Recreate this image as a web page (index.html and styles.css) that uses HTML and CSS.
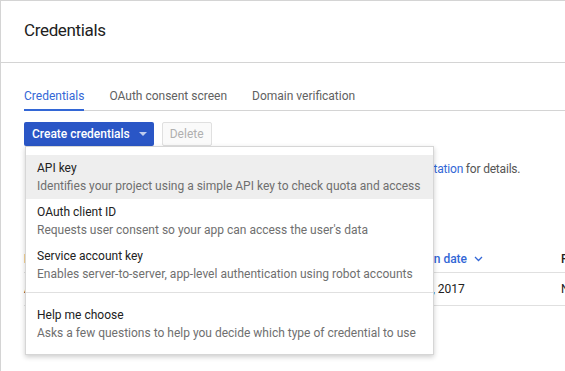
FILE: index.html
```html
<!DOCTYPE html>
<html lang="en">
<head>
  <meta charset="UTF-8">
  <meta name="viewport" content="width=device-width, initial-scale=1">
  <title>Credentials</title>
  <link rel="stylesheet" href="styles.css">
</head>
<body>

<div class="page">
  <div class="page-header">Credentials</div>

  <div class="content">
    <div class="tabs">
      <div class="tab active">Credentials</div>
      <div class="tab">OAuth consent screen</div>
      <div class="tab">Domain verification</div>
    </div>

    <div class="actions">
      <button class="btn-primary">Create credentials <span class="caret"></span></button>
      <button class="btn-disabled" disabled>Delete</button>

      <div class="menu">
        <div class="menu-item hover">
          <div class="item-title">API key</div>
          <div class="item-desc">Identifies your project using a simple API key to check quota and access</div>
        </div>
        <div class="menu-item">
          <div class="item-title">OAuth client ID</div>
          <div class="item-desc">Requests user consent so your app can access the user's data</div>
        </div>
        <div class="menu-item">
          <div class="item-title">Service account key</div>
          <div class="item-desc">Enables server-to-server, app-level authentication using robot accounts</div>
        </div>
        <div class="menu-divider"></div>
        <div class="menu-item">
          <div class="item-title">Help me choose</div>
          <div class="item-desc">Asks a few questions to help you decide which type of credential to use</div>
        </div>
      </div>
    </div>

    <p class="intro">Create credentials to access your enabled APIs. Refer to the <a href="#">API documentation</a> for details.</p>

    <div class="table">
      <div class="row head">
        <div>Name</div>
        <div class="sorted">Creation date
          <svg width="9" height="6" viewBox="0 0 9 6"><path d="M1 1l3.5 3.5L8 1" fill="none" stroke="#3367d6" stroke-width="1.3"/></svg>
        </div>
        <div>Restrictions</div>
      </div>
      <div class="row">
        <div>API key 1</div>
        <div>Mar 23, 2017</div>
        <div>None</div>
      </div>
    </div>
  </div>
</div>

</body>
</html>
```

FILE: styles.css
```css
body {
  margin: 0;
  font-family: Roboto, 'Liberation Sans', sans-serif;
  font-size: 12px;
  color: #212121;
  overflow: hidden;
}

.page {
  border-top: 1px solid #d4d4d4;
  border-left: 1px solid #d4d4d4;
  height: 370px;
  background: #fff;
}

.page-header {
  font-size: 17px;
  letter-spacing: -0.35px;
  line-height: 24px;
  padding: 17px 23px 20px;
  border-bottom: 1px solid #d4d4d4;
}

.content {
  padding: 0 0 0 23px;
}

.tabs {
  display: flex;
  gap: 25px;
  margin-top: 24px;
  border-bottom: 1px solid #d4d4d4;
  line-height: 18px;
}

.tab {
  color: #616161;
  padding-bottom: 4px;
  border-bottom: 2px solid transparent;
  margin-bottom: -1px;
}

.tab.active {
  color: #3367d6;
  border-bottom-color: #3367d6;
}

.actions {
  position: relative;
  display: flex;
  gap: 8px;
  margin-top: 11px;
}

button {
  font-family: inherit;
  font-size: 12px;
  height: 24px;
  border-radius: 2px;
  padding: 0 8px;
}

.btn-primary {
  background: #2a56c6;
  color: #fff;
  font-weight: 500;
  border: none;
  display: flex;
  align-items: center;
  padding-right: 7px;
}

.caret {
  margin-left: 9px;
  border-left: 4px solid transparent;
  border-right: 4px solid transparent;
  border-top: 4px solid rgba(255, 255, 255, 0.7);
}

.btn-disabled {
  background: #fafafa;
  color: #b0b0b0;
  border: 1px solid #e0e0e0;
  padding: 0 7px;
}

.menu {
  position: absolute;
  top: 24px;
  left: 1px;
  width: 407px;
  background: #fff;
  border: 1px solid #d6d6d6;
  box-shadow: 0 2px 5px rgba(0, 0, 0, 0.2);
  padding: 8px 0;
  z-index: 2;
  line-height: 18px;
}

.menu-item {
  padding: 4px 11px;
}

.menu-item.hover {
  background: #eeeeee;
}

.item-desc {
  color: #6f6f6f;
  white-space: nowrap;
}

.menu-divider {
  border-top: 1px solid #e0e0e0;
  margin: 5px 0 9px;
}

.intro {
  margin: 14px 0 0;
  padding-left: 31px;
  line-height: 18px;
  letter-spacing: -0.2px;
  color: #555;
  white-space: nowrap;
}

.intro a {
  color: #3367d6;
  text-decoration: none;
}

.table {
  margin-top: 72px;
}

.row {
  display: grid;
  grid-template-columns: 371px 166px 200px;
  line-height: 18px;
  padding: 7px 0;
  border-bottom: 1px solid #e0e0e0;
  white-space: nowrap;
}

.row.head {
  font-weight: 500;
  padding: 0 0 4px;
}

.sorted {
  color: #3367d6;
}

.sorted svg {
  margin-left: 4px;
  vertical-align: 1px;
}
```
